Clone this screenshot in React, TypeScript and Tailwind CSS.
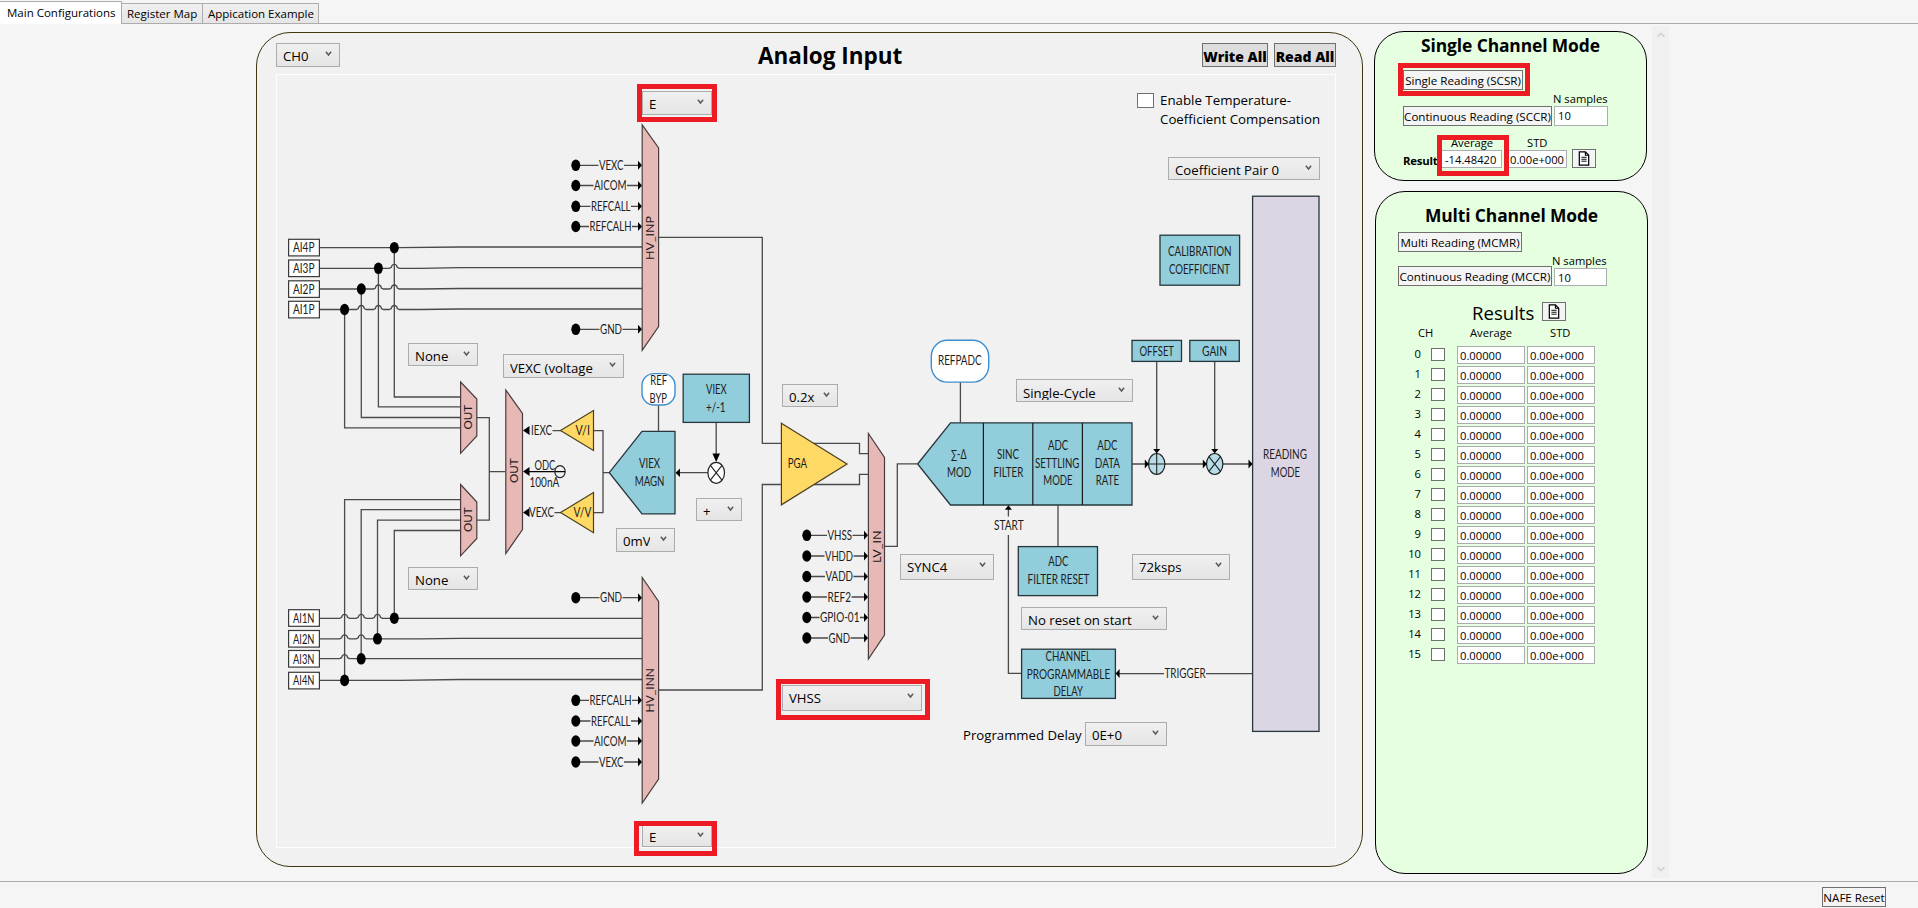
import React from "react";

type ComboProps = { label: string; box: string; text?: string };

function Chevron() {
  return (
    <svg viewBox="0 0 7 6" className="absolute right-[7px] top-[7px] h-[6px] w-[7px]">
      <path d="M0.9 0.8 L3.5 4 L6.1 0.8" fill="none" stroke="#5a5a5a" strokeWidth="1.5" />
    </svg>
  );
}

function Combo({ label, box, text = "" }: ComboProps) {
  return (
    <button
      className={`${box} border border-[#acacac] bg-linear-to-b from-[#f0f0f0] to-[#e5e5e5] text-left text-[13.2px] text-black`}
    >
      <span className={`ml-[6px] block whitespace-nowrap leading-[25px] ${text}`}>{label}</span>
      <Chevron />
    </button>
  );
}

type LabelProps = { x1: number; x2: number; y: number; children: string; size?: number };

/* Text stretched between x1 and x2 on baseline y. */
function Label({ x1, x2, y, children, size = 12.8 }: LabelProps) {
  return (
    <text x={x1} y={y} fontSize={size} textLength={x2 - x1} lengthAdjust="spacingAndGlyphs" fill="#1c1c1c">
      {children}
    </text>
  );
}

/* Vertical text reading upwards, from yBottom to yTop, with its baseline at x. */
function VLabel({ x, yTop, yBottom, children }: { x: number; yTop: number; yBottom: number; children: string }) {
  return (
    <text
      transform={`translate(${x} ${yBottom}) rotate(-90)`}
      fontSize={11.5}
      textLength={yBottom - yTop}
      lengthAdjust="spacingAndGlyphs"
      fill="#1c1c1c"
    >
      {children}
    </text>
  );
}

function Dot({ x, y }: { x: number; y: number }) {
  return <ellipse cx={x} cy={y} rx={4.5} ry={5.8} fill="#000" />;
}

type Dir = "r" | "l" | "u" | "d";
function Arrow({ x, y, dir }: { x: number; y: number; dir: Dir }) {
  const d = {
    r: `M${x} ${y} l-4 -4.5 v9 z`,
    l: `M${x} ${y} l4 -4.5 v9 z`,
    u: `M${x} ${y} l-3.5 4.5 h7 z`,
    d: `M${x} ${y} l-3.5 -4.5 h7 z`,
  }[dir];
  return <path d={d} fill="#000" />;
}

function Wire({ d }: { d: string }) {
  return <path d={d} fill="none" stroke="#4a4a4a" strokeWidth={1.3} />;
}

/* An input pin: dot, label and an arrow into the multiplexer. */
function Pin({ x, tip, y, x1, x2, name }: { x: number; tip: number; y: number; x1: number; x2: number; name: string }) {
  return (
    <g>
      <Wire d={`M${x} ${y} H${x1 - 0.5} M${x2 + 0.5} ${y} H${tip - 2}`} />
      <Dot x={x} y={y} />
      <Arrow x={tip} y={y} dir="r" />
      <Label x1={x1} x2={x2} y={y + 4.6}>{name}</Label>
    </g>
  );
}

function Block({ x, y, w, h, fill = "#92cddb" }: { x: number; y: number; w: number; h: number; fill?: string }) {
  return <rect x={x} y={y} width={w} height={h} fill={fill} stroke="#26373c" strokeWidth={1.3} />;
}

/* Horizontal wire with small humps where it passes over vertical wires. */
function hopWire(y: number, yEnd: number, hops: number[]) {
  const humps = hops.map((h) => `H${h - 5} l2 -1 q0.5 -3 3 -3 q2.5 0 3 3 l2 1`).join(" ");
  return `M320 ${y} ${humps} H${hops.length ? 420 : 400} L460 ${yEnd} H642`;
}

const inpPins = [
  { y: 165.3, x1: 599, x2: 623.5, name: "VEXC" },
  { y: 185.5, x1: 594, x2: 626.5, name: "AICOM" },
  { y: 206.3, x1: 591, x2: 630.5, name: "REFCALL" },
  { y: 226.5, x1: 589.5, x2: 631.5, name: "REFCALH" },
  { y: 329.3, x1: 600, x2: 622, name: "GND" },
];
const innPins = [
  { y: 597.7, x1: 600, x2: 622, name: "GND" },
  { y: 700.3, x1: 589.5, x2: 631.5, name: "REFCALH" },
  { y: 721, x1: 591, x2: 630.5, name: "REFCALL" },
  { y: 741, x1: 594, x2: 626.5, name: "AICOM" },
  { y: 762, x1: 599, x2: 623.5, name: "VEXC" },
];
const lvPins = [
  { y: 535.3, x1: 827.5, x2: 852, name: "VHSS" },
  { y: 556, x1: 825, x2: 853, name: "VHDD" },
  { y: 576.5, x1: 825.5, x2: 853, name: "VADD" },
  { y: 597, x1: 827.5, x2: 851, name: "REF2" },
  { y: 617.5, x1: 820, x2: 859.5, name: "GPIO-01" },
  { y: 638, x1: 828.5, x2: 850, name: "GND" },
];
const terminals = [
  { y: 239.3, name: "AI4P" },
  { y: 260, name: "AI3P" },
  { y: 280.8, name: "AI2P" },
  { y: 301.3, name: "AI1P" },
  { y: 609.7, name: "AI1N" },
  { y: 630.5, name: "AI2N" },
  { y: 650.5, name: "AI3N" },
  { y: 672.3, name: "AI4N" },
];

function Diagram() {
  const pink = { fill: "#e6b8b6", stroke: "#4a3c3c", strokeWidth: 1.2 };
  const yellow = { fill: "#ffd966", stroke: "#4a4020", strokeWidth: 1.2 };
  const teal = { fill: "#92cddb", stroke: "#26373c", strokeWidth: 1.3 };
  return (
    <svg viewBox="276 74 1060 774" className="block h-[774px] w-[1060px] font-['Lato',sans-serif]">
      {/* wires from the terminals */}
      <Wire d={hopWire(247.6, 247, [])} />
      <Wire d={hopWire(268.3, 267.6, [394.3])} />
      <Wire d={hopWire(289, 288.5, [378.4, 394.3])} />
      <Wire d={hopWire(309.5, 309, [361.3, 378.4, 394.3])} />
      <Wire d={hopWire(618.3, 618.3, [344.6, 361.2, 377.5])} />
      <Wire d={hopWire(638.8, 638.3, [344.6, 361.2])} />
      <Wire d={hopWire(658.7, 658.7, [344.6])} />
      <Wire d={hopWire(680.3, 679.5, [])} />
      <Wire d="M394.3 248 V397 H460" />
      <Wire d="M378.4 268 V406.8 H460" />
      <Wire d="M361.3 289 V417.5 H460" />
      <Wire d="M344.6 309 V427.8 H460" />
      <Wire d="M344.6 680 V499.6 H460" />
      <Wire d="M361.2 658 V509.6 H460" />
      <Wire d="M377.5 638 V520.2 H460" />
      <Wire d="M394.3 618 V530.5 H460" />
      <Wire d="M477 417.6 H489.3 V520.2 H477 M489.3 471.6 H505" />
      <Dot x={394.3} y={247.7} />
      <Dot x={378.4} y={268.3} />
      <Dot x={361.3} y={289} />
      <Dot x={344.6} y={309.5} />
      <Dot x={394.3} y={618.2} />
      <Dot x={377.5} y={638.8} />
      <Dot x={361.2} y={658.8} />
      <Dot x={344.6} y={680.4} />
      {terminals.map((t) => (
        <g key={t.name}>
          <rect x={288.6} y={t.y} width={30.8} height={16.6} fill="#fff" stroke="#3a3a3a" strokeWidth={1.2} />
          <Label x1={293} x2={314.5} y={t.y + 13}>{t.name}</Label>
        </g>
      ))}

      {/* multiplexers */}
      <polygon points="642.2,124.8 658.6,148 658.6,326.5 642.2,350.4" {...pink} />
      <polygon points="642.2,577.5 658.6,601.5 658.6,779 642.2,803" {...pink} />
      <polygon points="460.6,382 476.8,399 476.8,436 460.6,453.3" {...pink} />
      <polygon points="460.6,484.5 476.8,502 476.8,538.5 460.6,555.8" {...pink} />
      <polygon points="505.8,390 522.5,413.5 522.5,529.5 505.8,553.5" {...pink} />
      <polygon points="868.4,433.5 884.5,457.5 884.5,635 868.4,659" {...pink} />
      <VLabel x={653.8} yTop={216} yBottom={260}>HV_INP</VLabel>
      <VLabel x={653.6} yTop={668} yBottom={712.5}>HV_INN</VLabel>
      <VLabel x={472.4} yTop={405} yBottom={429.5}>OUT</VLabel>
      <VLabel x={472.4} yTop={507.5} yBottom={532}>OUT</VLabel>
      <VLabel x={518} yTop={458.5} yBottom={483}>OUT</VLabel>
      <VLabel x={880.6} yTop={530.5} yBottom={563}>LV_IN</VLabel>
      {inpPins.map((p) => <Pin key={p.name} x={575.8} tip={642} {...p} />)}
      {innPins.map((p) => <Pin key={p.name} x={575.8} tip={642} {...p} />)}
      {lvPins.map((p) => <Pin key={p.name} x={806.8} tip={868} {...p} />)}

      {/* excitation source */}
      <Wire d="M552.5 430.6 H561 M593.5 430.6 H603 V512.6 H593.5 M603 472.6 H609 M554.5 512.6 H561" />
      <path d="M523 430.6 l6.5 -4.5 v9 z M523 471.6 l6.5 -4.5 v9 z M523 512.6 l6.5 -4.5 v9 z" />
      <path d="M529 471.6 H565" stroke="#000" strokeWidth={1.2} />
      <ellipse cx={560} cy={471.6} rx={5.2} ry={6} fill="none" stroke="#222" strokeWidth={1.2} />
      <Label x1={531} x2={552} y={435}>IEXC</Label>
      <Label x1={534.5} x2={555.3} y={469.8}>ODC</Label>
      <Label x1={529.5} x2={559.3} y={487.3}>100nA</Label>
      <Label x1={529} x2={554} y={517}>VEXC</Label>
      <polygon points="560.5,430.6 593.5,410.5 593.5,450.5" {...yellow} />
      <polygon points="560.5,512.6 593.5,492.5 593.5,532.8" {...yellow} />
      <Label x1={575.5} x2={590} y={434.8}>V/I</Label>
      <Label x1={573.5} x2={591.3} y={516.8}>V/V</Label>
      <polygon points="609.3,472.7 642,431.4 675,431.4 675,513.8 642,513.8" {...teal} />
      <Label x1={639} x2={660} y={468}>VIEX</Label>
      <Label x1={634.7} x2={664.5} y={485.6}>MAGN</Label>
      <Wire d="M658.5 405 V431 M716.2 422 V455 M708 472.7 H680" />
      <rect x={642} y={373.6} width={33} height={31.4} rx={12} fill="#fff" stroke="#3d8fcf" strokeWidth={1.4} />
      <Label x1={650.3} x2={667} y={385.2}>REF</Label>
      <Label x1={649.6} x2={667} y={402.6}>BYP</Label>
      <Block x={683.2} y={374.2} w={66.2} h={48.2} />
      <Label x1={706} x2={726.7} y={394}>VIEX</Label>
      <Label x1={706} x2={725.5} y={411.6}>+/-1</Label>
      <path d="M716.2 462 l-3.8 -8.5 h7.6 z M675.5 472.7 l4.5 -4.3 v8.6 z" />
      <ellipse cx={716.2} cy={472.8} rx={8.3} ry={10.5} fill="#fff" stroke="#222" strokeWidth={1.2} />
      <path d="M710.4 465.4 L722 480.2 M722 465.4 L710.4 480.2" stroke="#222" strokeWidth={1.1} />

      {/* amplifier */}
      <Wire d="M659 237.4 H762.3 V443.3 H781 M659 690 H762.3 V484.5 H781" />
      <Wire d="M812 443.4 H859.5 V453.6 H868 M812 484.5 H859.5 V474.3 H868" />
      <polygon points="781.4,423.2 847,464 781.4,504.8" {...yellow} />
      <Label x1={787.8} x2={807} y={468}>PGA</Label>
      <Wire d="M885 546.3 H897.3 V463.8 H917" />

      {/* converter */}
      <polygon points="917.6,464 950.5,422.8 1132,422.8 1132,505 950.5,505" {...teal} />
      <path d="M983.4 423 V505 M1032.8 423 V505 M1082.4 423 V505" stroke="#1a1a1a" strokeWidth={1.2} />
      <Label x1={951} x2={966.5} y={459.2}>∑-Δ</Label>
      <Label x1={947} x2={971} y={476.6}>MOD</Label>
      <Label x1={997} x2={1019} y={459.2}>SINC</Label>
      <Label x1={993.5} x2={1023.3} y={476.6}>FILTER</Label>
      <Label x1={1048} x2={1068.3} y={450.2}>ADC</Label>
      <Label x1={1035} x2={1079.4} y={467.8}>SETTLING</Label>
      <Label x1={1043.3} x2={1072.5} y={485.3}>MODE</Label>
      <Label x1={1097.3} x2={1117.5} y={450.2}>ADC</Label>
      <Label x1={1094.8} x2={1120} y={467.8}>DATA</Label>
      <Label x1={1095.8} x2={1119} y={485.3}>RATE</Label>
      <Wire d="M960.4 382 V422.5" />
      <rect x={931.3} y={340.3} width={57.4} height={41.8} rx={16} fill="#fff" stroke="#3d8fcf" strokeWidth={1.4} />
      <Label x1={938} x2={981.6} y={365.2}>REFPADC</Label>

      <Block x={1160} y={235.2} w={79.6} h={50} />
      <Label x1={1168} x2={1231.6} y={256.2}>CALIBRATION</Label>
      <Label x1={1169} x2={1230} y={273.6}>COEFFICIENT</Label>

      <Wire d="M1132 464 H1252 M1156.7 361 V452 M1214.7 361 V452" />
      <Block x={1132} y={340.4} w={49.5} h={21} />
      <Label x1={1139.5} x2={1174} y={355.6}>OFFSET</Label>
      <Block x={1189.8} y={340.4} w={49.5} h={21} />
      <Label x1={1202} x2={1227} y={355.6}>GAIN</Label>
      <ellipse cx={1156.7} cy={464} rx={8.2} ry={10.5} fill="#b7dde8" stroke="#222" strokeWidth={1.2} />
      <ellipse cx={1214.7} cy={464} rx={8.2} ry={10.5} fill="#b7dde8" stroke="#222" strokeWidth={1.2} />
      <path d="M1148.5 464 H1165 M1156.7 453.5 V474.5 M1208.9 456.6 L1220.5 471.4 M1220.5 456.6 L1208.9 471.4" stroke="#222" strokeWidth={1.1} />
      <Arrow x={1156.7} y={453.5} dir="d" />
      <Arrow x={1214.7} y={453.5} dir="d" />
      <Arrow x={1148.8} y={464} dir="r" />
      <Arrow x={1206.8} y={464} dir="r" />
      <Arrow x={1252.5} y={464} dir="r" />
      <Block x={1252.6} y={196.2} w={66.4} h={535.2} fill="#dcd6e4" />
      <Label x1={1263} x2={1307} y={459.2}>READING</Label>
      <Label x1={1270.8} x2={1300} y={476.6}>MODE</Label>

      <Wire d="M1008.4 507 V516.5 M1008.4 535 V673.4 H1021 M1058 505 V546 M1252 673.6 H1206 M1164 673.6 H1118" />
      <Arrow x={1008.4} y={505.2} dir="u" />
      <Label x1={994} x2={1023.6} y={530}>START</Label>
      <Block x={1018.3} y={546.6} w={79.2} h={49} />
      <Label x1={1048.3} x2={1068.5} y={566}>ADC</Label>
      <Label x1={1027.6} x2={1089.4} y={583.6}>FILTER RESET</Label>
      <Block x={1021.6} y={649.2} w={93.8} h={49.2} />
      <Label x1={1045.5} x2={1091} y={661.2}>CHANNEL</Label>
      <Label x1={1026.8} x2={1110.3} y={678.6}>PROGRAMMABLE</Label>
      <Label x1={1053.6} x2={1083} y={696}>DELAY</Label>
      <Arrow x={1115.6} y={673.6} dir="l" />
      <Label x1={1164.5} x2={1205.6} y={678.4}>TRIGGER</Label>
    </svg>
  );
}

function DocButton() {
  return (
    <button className="flex h-[19px] w-6 shrink-0 items-center justify-center border border-[#707070] bg-[#f4f4f4]">
      <svg viewBox="0 0 12 16" className="h-[15px] w-3">
        <path d="M1 1 H7.5 L11 4.5 V15 H1 Z" fill="#fff" stroke="#000" strokeWidth="1.3" />
        <path d="M7.5 1 V4.5 H11" fill="none" stroke="#000" strokeWidth="1.2" />
        <path d="M3.2 6.7 H8.8 M3.2 8.8 H8.8 M3.2 10.9 H8.8" stroke="#000" strokeWidth="1" />
      </svg>
    </button>
  );
}

function Field({ value, className }: { value: string; className: string }) {
  return (
    <div className={`shrink-0 whitespace-nowrap border border-[#abadb3] bg-white ${className}`}>{value}</div>
  );
}

const btn =
  "flex h-5 shrink-0 justify-center whitespace-nowrap border border-[#707070] bg-[#f4f4f4] text-[11.6px] leading-[20px]";
const mark = "pointer-events-none absolute border-[5px] border-[#ed1c24]";

function SinglePanel() {
  return (
    <section className="relative h-[150px] w-[273px] rounded-[30px] border border-black bg-[#e6ffe1] pt-px">
      <h2 className="text-center text-[17.4px] font-bold leading-6 tracking-[-0.1px]">Single Channel Mode</h2>
      <div className="ml-7 mt-[13px] flex">
        <button className={`${btn} w-[120px]`}>Single Reading (SCSR)</button>
      </div>
      <div className="ml-[178px] h-4 leading-[17px]">N samples</div>
      <div className="ml-7 flex gap-[2px]">
        <button className={`${btn} w-[149px]`}>Continuous Reading (SCCR)</button>
        <Field value="10" className="h-5 w-[54px] pl-[3px] leading-[18px]" />
      </div>
      <div className="mt-2 flex h-4 pl-[76px] leading-[18px]">
        <span className="w-[76px]">Average</span>
        <span>STD</span>
      </div>
      <div className="ml-7 flex">
        <span className="w-[38px] pt-px text-[11.4px] font-bold leading-5 tracking-[-0.2px]">Result</span>
        <Field value="-14.48420" className="h-[18px] w-[61px] pl-[3px] leading-[18px]" />
        <Field value="0.00e+000" className="ml-[5px] h-[18px] w-[60px] pl-[2px] leading-[18px]" />
        <div className="-mt-px ml-[5px]">
          <DocButton />
        </div>
      </div>
      <div className={`${mark} left-[23px] top-[31px] h-[33px] w-[132px]`} />
      <div className={`${mark} left-[62px] top-[103px] h-[41px] w-[72px]`} />
    </section>
  );
}

function MultiPanel() {
  return (
    <section className="ml-px mt-[10px] h-[683px] w-[273px] rounded-[30px] border border-black bg-[#e6ffe1] pt-[11px]">
      <h2 className="text-center text-[17.4px] font-bold leading-6 tracking-[-0.1px]">Multi Channel Mode</h2>
      <div className="ml-[22px] mt-[5px] flex">
        <button className={`${btn} w-[124px]`}>Multi Reading (MCMR)</button>
      </div>
      <div className="ml-[176px] h-[14px] leading-[17px]">N samples</div>
      <div className="ml-[22px] flex items-end gap-[2px]">
        <button className={`${btn} w-[154px]`}>Continuous Reading (MCCR)</button>
        <Field value="10" className="h-[18px] w-[53px] pl-[3px] leading-[17px]" />
      </div>
      <div className="mt-4 flex h-[19px]">
        <span className="ml-[96px] w-[70px] text-[18.6px] leading-[21px]">Results</span>
        <DocButton />
      </div>
      <div className="ml-[42px] mt-1 flex h-[17px] leading-4">
        <span className="w-[52px]">CH</span>
        <span className="w-[80px]">Average</span>
        <span>STD</span>
      </div>
      <div className="mt-1 flex flex-col gap-[2px]">
        {Array.from({ length: 16 }, (_, ch) => (
          <div key={ch} className="flex h-[18px]">
            <span className="w-[45px] text-right leading-4">{ch}</span>
            <span className="ml-[10px] mt-[2px] h-[13px] w-[14px] border border-[#707070] bg-white" />
            <Field value="0.00000" className="ml-3 h-[18px] w-[68px] pl-[2px] leading-[17px]" />
            <Field value="0.00e+000" className="ml-[2px] h-[18px] w-[68px] pl-[2px] leading-[17px]" />
          </div>
        ))}
      </div>
    </section>
  );
}

function AnalogPanel() {
  return (
    <section className="ml-[256px] mt-2 h-[835px] w-[1107px] shrink-0 rounded-[34px] border border-[#3f3510] bg-[#f1f1f1] pl-[19px]">
      <header className="flex h-[41px] w-[1060px] items-start pt-[10px]">
        <Combo label="CH0" box="relative h-6 w-16 shrink-0" />
        <h1 className="-mt-px ml-[418px] text-[22.5px] font-bold leading-[28px]">Analog Input</h1>
        <div className="ml-auto flex gap-[6px] text-[14px] font-extrabold leading-[25px]">
          <button className="flex h-6 w-[66px] justify-center whitespace-nowrap border border-[#707070] bg-[#dddddd]">
            Write All
          </button>
          <button className="flex h-6 w-[62px] justify-center whitespace-nowrap border border-[#707070] bg-[#dddddd]">
            Read All
          </button>
        </div>
      </header>
      <div className="relative h-[774px] w-[1060px] shadow-[inset_0_0_0_1px_#fdfdfd]">
        <Diagram />
        <Combo label="E" box="absolute left-[366px] top-[17px] h-6 w-[70px]" />
        <Combo label="None" box="absolute left-[132px] top-[269px] h-[23px] w-[70px]" />
        <Combo label="VEXC (voltage" box="absolute left-[227px] top-[280px] h-6 w-[121px]" text="h-[20px] overflow-hidden" />
        <Combo label="None" box="absolute left-[132px] top-[493px] h-[23px] w-[70px]" />
        <Combo label="0mV" box="absolute left-[340px] top-[454px] h-6 w-[59px]" text="w-[27px] overflow-hidden" />
        <Combo label="+" box="absolute left-[420px] top-[424px] h-[23px] w-[46px]" />
        <Combo label="0.2x" box="absolute left-[506px] top-[310px] h-[23px] w-[56px]" />
        <Combo label="Single-Cycle" box="absolute left-[740px] top-[305px] h-[23px] w-[117px]" text="h-[19px] overflow-hidden" />
        <Combo label="SYNC4" box="absolute left-[624px] top-[480px] h-[26px] w-[94px]" />
        <Combo label="72ksps" box="absolute left-[856px] top-[480px] h-[26px] w-[98px]" />
        <Combo label="No reset on start" box="absolute left-[745px] top-[533px] h-[23px] w-[146px]" />
        <Combo label="0E+0" box="absolute left-[809px] top-[648px] h-6 w-[82px]" />
        <Combo label="Coefficient Pair 0" box="absolute left-[892px] top-[83px] h-[23px] w-[152px]" />
        <Combo label="VHSS" box="absolute left-[506px] top-[611px] h-[26px] w-[140px]" />
        <Combo label="E" box="absolute left-[366px] top-[750px] h-[23px] w-[70px]" />
        <div className="absolute left-[687px] top-[649px] whitespace-nowrap text-[13.2px] leading-[25px]">Programmed Delay</div>
        <label className="absolute left-[861px] top-[17px] flex text-[13.3px] leading-[19px]">
          <span className="mr-[6px] mt-[2px] h-[15px] w-[17px] border border-[#707070] bg-white" />
          <span className="whitespace-nowrap">
            Enable Temperature-
            <br />
            Coefficient Compensation
          </span>
        </label>
        <div className={`${mark} left-[361px] top-[10px] h-[38px] w-[80px]`} />
        <div className={`${mark} left-[500px] top-[605px] h-[41px] w-[154px]`} />
        <div className={`${mark} left-[358px] top-[747px] h-[35px] w-[83px]`} />
      </div>
    </section>
  );
}

export default function App() {
  return (
    <div className="flex h-[908px] w-[1918px] flex-col overflow-hidden bg-[#f5f5f5] font-['Open_Sans','Noto_Sans',sans-serif] text-[11.2px] text-black">
      <nav className="flex h-6 shrink-0 items-end border-b border-[#acacac] text-[11.5px]">
        <div className="-mb-px h-[23px] w-[122px] whitespace-nowrap border-r border-t border-[#acacac] bg-white pl-[7px] leading-[22px]">
          Main Configurations
        </div>
        <div className="h-5 w-[81px] whitespace-nowrap border-r border-t border-[#acacac] bg-linear-to-b from-[#f0f0f0] to-[#e5e5e5] pl-[5px] leading-[19px]">
          Register Map
        </div>
        <div className="h-5 w-[116px] whitespace-nowrap border-r border-t border-[#acacac] bg-linear-to-b from-[#f0f0f0] to-[#e5e5e5] pl-[5px] leading-[19px]">
          Appication Example
        </div>
      </nav>
      <main className="flex h-[857px] shrink-0">
        <AnalogPanel />
        <div className="ml-[11px] w-[274px] shrink-0 pt-[7px]">
          <SinglePanel />
          <MultiPanel />
        </div>
        <div className="ml-1 mt-[2px] flex h-[852px] w-[17px] flex-col items-center justify-between bg-[#f0f0f0] py-[6px]">
          <svg viewBox="0 0 8 6" className="h-[6px] w-2">
            <path d="M0.5 5 L4 1.2 L7.5 5" fill="none" stroke="#cfcfcf" strokeWidth="1.4" />
          </svg>
          <svg viewBox="0 0 8 6" className="h-[6px] w-2">
            <path d="M0.5 1 L4 4.8 L7.5 1" fill="none" stroke="#cfcfcf" strokeWidth="1.4" />
          </svg>
        </div>
      </main>
      <footer className="flex h-[27px] shrink-0 justify-end border-t border-[#acacac] pr-8 pt-[5px]">
        <button className={`${btn} w-16`}>NAFE Reset</button>
      </footer>
    </div>
  );
}
